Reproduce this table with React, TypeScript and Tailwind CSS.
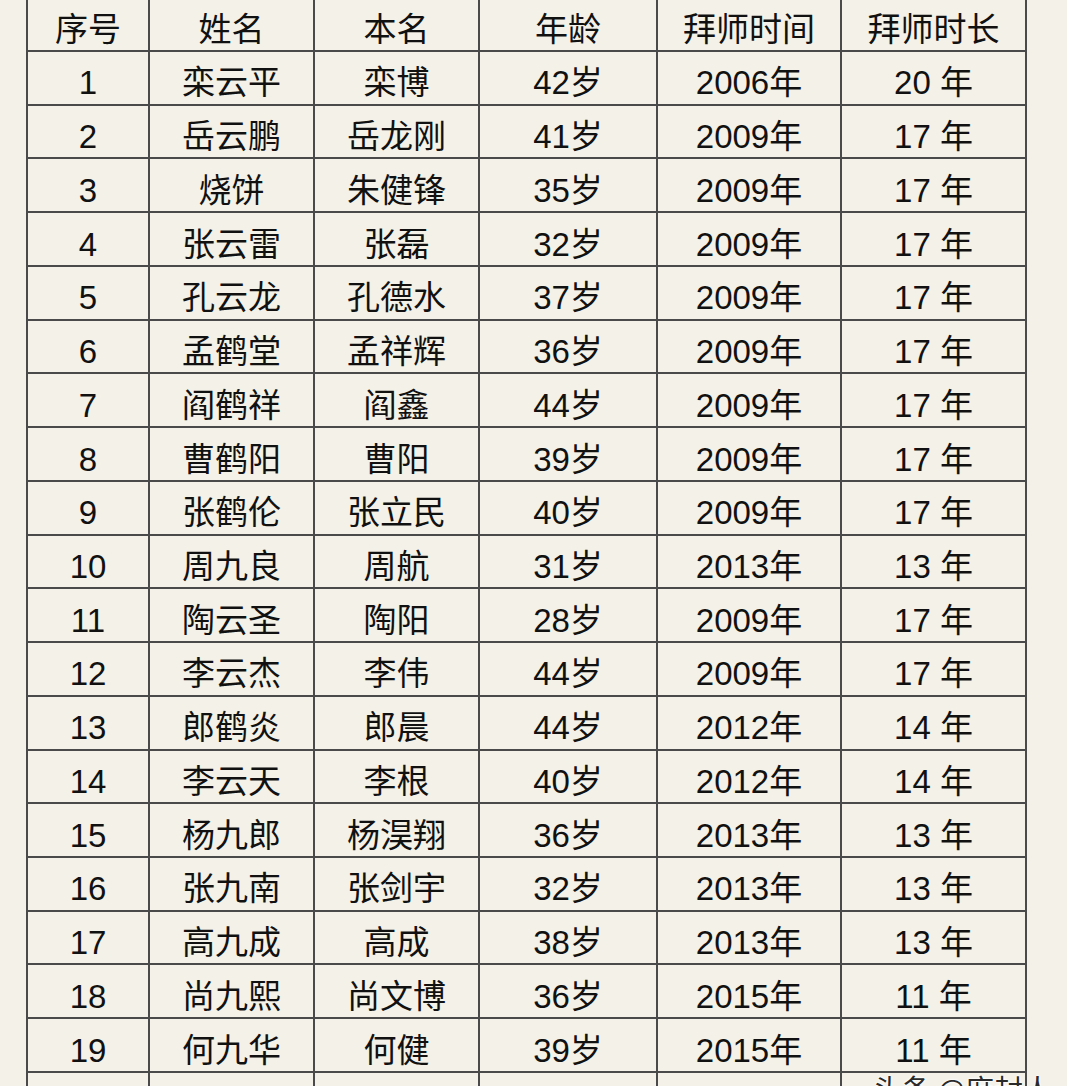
const headers = ['序号', '姓名', '本名', '年龄', '拜师时间', '拜师时长']

const rows: string[][] = [
  ['1', '栾云平', '栾博', '42岁', '2006年', '20 年'],
  ['2', '岳云鹏', '岳龙刚', '41岁', '2009年', '17 年'],
  ['3', '烧饼', '朱健锋', '35岁', '2009年', '17 年'],
  ['4', '张云雷', '张磊', '32岁', '2009年', '17 年'],
  ['5', '孔云龙', '孔德水', '37岁', '2009年', '17 年'],
  ['6', '孟鹤堂', '孟祥辉', '36岁', '2009年', '17 年'],
  ['7', '阎鹤祥', '阎鑫', '44岁', '2009年', '17 年'],
  ['8', '曹鹤阳', '曹阳', '39岁', '2009年', '17 年'],
  ['9', '张鹤伦', '张立民', '40岁', '2009年', '17 年'],
  ['10', '周九良', '周航', '31岁', '2013年', '13 年'],
  ['11', '陶云圣', '陶阳', '28岁', '2009年', '17 年'],
  ['12', '李云杰', '李伟', '44岁', '2009年', '17 年'],
  ['13', '郎鹤炎', '郎晨', '44岁', '2012年', '14 年'],
  ['14', '李云天', '李根', '40岁', '2012年', '14 年'],
  ['15', '杨九郎', '杨淏翔', '36岁', '2013年', '13 年'],
  ['16', '张九南', '张剑宇', '32岁', '2013年', '13 年'],
  ['17', '高九成', '高成', '38岁', '2013年', '13 年'],
  ['18', '尚九熙', '尚文博', '36岁', '2015年', '11 年'],
  ['19', '何九华', '何健', '39岁', '2015年', '11 年'],
  // last row is cut off by the bottom edge
  ['', '', '', '', '', ''],
]

function Cell({ text, header }: { text: string; header?: boolean }) {
  return (
    <div
      className={`flex items-center justify-center bg-[#f4f1e8] text-[33px] leading-none text-[#111] ${
        header ? 'h-[50px] pt-[8px]' : 'h-[51.74px] pt-[10px]'
      }`}
    >
      {text}
    </div>
  )
}

export default function App() {
  return (
    <div
      className="relative h-[1100px] w-[1067px] overflow-hidden bg-[#f4f1e8]"
      style={{ fontFamily: '"Liberation Sans", "Noto Sans CJK SC", sans-serif' }}
    >
      {/* table */}
      <div className="ml-[26px] inline-grid grid-cols-[120px_163px_163px_176px_182px_183px] gap-[2px] bg-[#4a4a4a] px-[2px] pb-[2px]">
        {headers.map((h) => (
          <Cell key={h} text={h} header />
        ))}
        {rows.map((row, i) =>
          row.map((c, j) => <Cell key={`${i}-${j}`} text={c} />)
        )}
      </div>

      {/* watermark */}
      <div
        className="absolute left-[873px] top-[1074px] text-[29px] leading-none text-[#2a2a2a]"
        style={{
          fontFamily: '"Noto Sans CJK SC", sans-serif',
          textShadow: '0 0 2px #fff, 0 0 2px #fff, 0 0 3px #fff',
        }}
      >
        头条 @庶封人
      </div>
    </div>
  )
}
